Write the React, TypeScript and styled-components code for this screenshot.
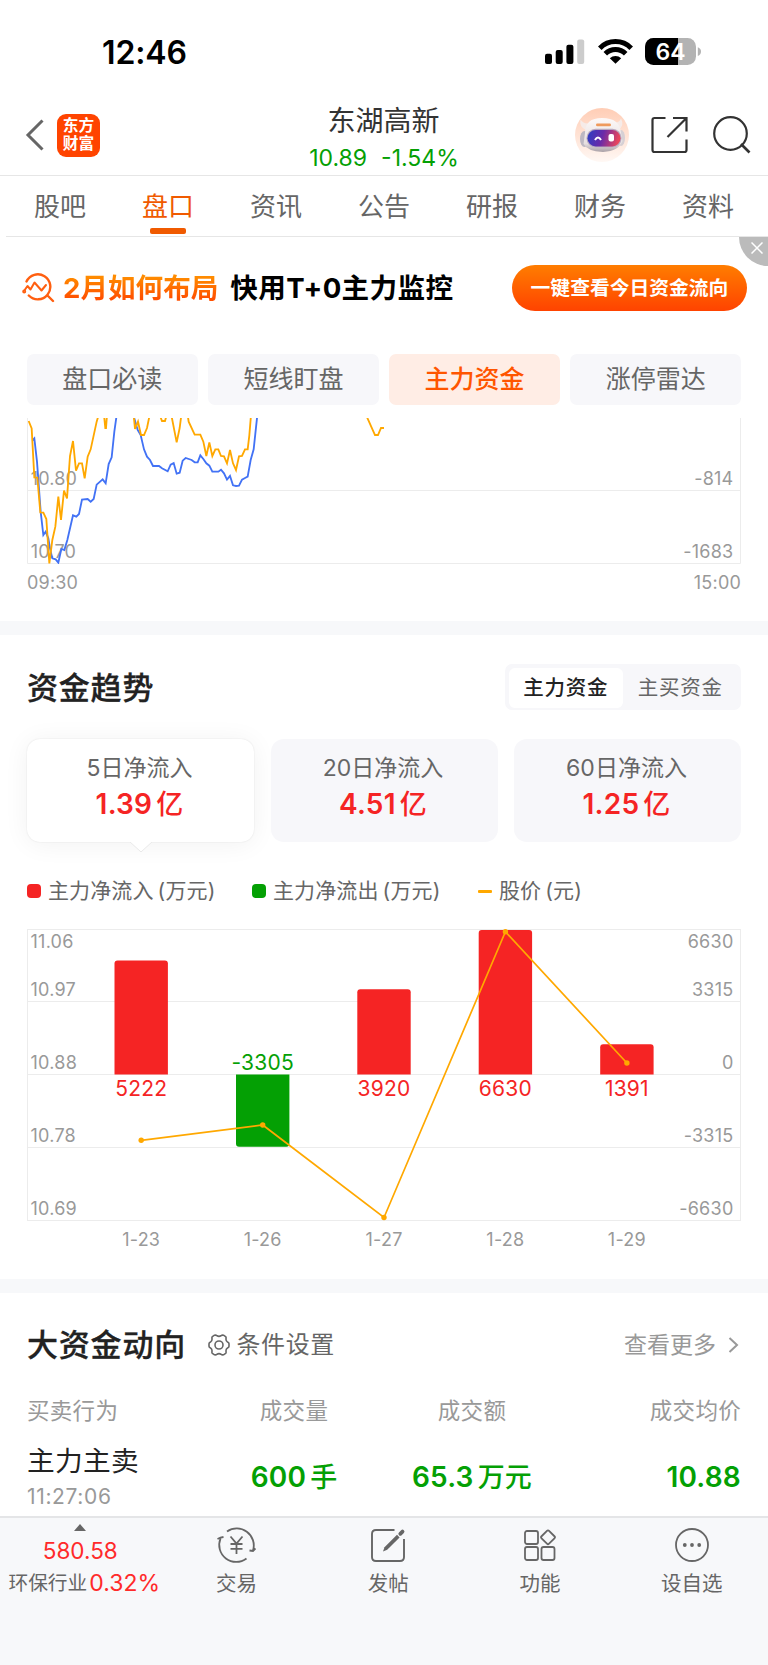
import React from "react";
import styled, { createGlobalStyle } from "styled-components";

const RED = "#f52424";
const GREEN = "#04a004";
const ORANGE = "#ffa800";
const GRID = "#ececec";
const FONT = `Inter, "Noto Sans CJK SC", sans-serif`;

const GlobalStyle = createGlobalStyle`
  * { box-sizing: border-box; }
  body { margin: 0; background: #fff; font-family: ${FONT}; color: #222; }
  svg { display: block; flex: none; }
  svg text { font-family: ${FONT}; }
`;

const Screen = styled.div`
  width: 768px;
  height: 1665px;
  display: flex;
  flex-direction: column;
  overflow: hidden;
  background: #fff;
  white-space: nowrap;
`;

/* ---------- status bar ---------- */
const StatusBar = styled.div`
  height: 95px;
  padding: 38px 66px 0 102px;
  display: flex;
  justify-content: space-between;
`;
const Clock = styled.div`
  font-size: 32px;
  line-height: 30px;
  font-weight: 600;
  letter-spacing: -0.15px;
  color: #000;
`;
const StatusIcons = styled.div`
  display: flex;
  align-items: flex-start;
  gap: 12.5px;
`;

/* ---------- navigation header ---------- */
const Header = styled.header`
  height: 81px;
  display: grid;
  grid-template-columns: 1fr auto 1fr;
  border-bottom: 1px solid #e6e6e6;
`;
const HeaderLeft = styled.div`
  display: flex;
  align-items: center;
  gap: 12px;
  padding-left: 25px;
`;
const Logo = styled.div`
  width: 43px;
  height: 43px;
  border-radius: 9px;
  background: #ff4400;
  color: #fff;
  display: flex;
  flex-direction: column;
  align-items: center;
  justify-content: center;
  font-size: 15.7px;
  line-height: 18px;
  font-weight: 700;
`;
const HeaderTitle = styled.div`
  display: flex;
  flex-direction: column;
  align-items: center;
`;
const StockName = styled.div`
  margin-top: 10px;
  margin-right: 1px;
  font-size: 28px;
  line-height: 32px;
  color: #333;
`;
const Quote = styled.div`
  margin-top: 5px;
  display: flex;
  gap: 14px;
  font-size: 23px;
  line-height: 32px;
  color: ${GREEN};
`;
const HeaderRight = styled.div`
  display: flex;
  align-items: center;
  justify-content: flex-end;
  padding-right: 17px;
`;
const HeaderIcon = styled.div<{ $gap: number }>`
  margin-left: ${(p) => p.$gap}px;
`;

/* ---------- tabs ---------- */
const Tabs = styled.nav`
  height: 61px;
  margin-left: 6px;
  display: grid;
  grid-template-columns: repeat(7, 108px);
  border-bottom: 1px solid #e6e6e6;
`;
const Tab = styled.div<{ $active?: boolean }>`
  display: flex;
  flex-direction: column;
  align-items: center;
  font-size: 26px;
  line-height: 34px;
  padding-top: 14px;
  color: ${(p) => (p.$active ? "#f05a00" : "#666")};
  &::after {
    content: "";
    width: 36px;
    height: 5.5px;
    margin-top: 4px;
    border-radius: 2px;
    background: ${(p) => (p.$active ? "#f05a00" : "transparent")};
  }
`;

/* ---------- promo banner ---------- */
const Banner = styled.div`
  position: relative;
  height: 117px;
  padding: 28px 21px 0 22px;
  display: flex;
  align-items: flex-start;
`;
const BannerText = styled.div`
  display: flex;
  align-items: center;
  height: 45px;
  color: #000;
  flex: 1;
`;
const BannerHot = styled.span`
  margin: 0 12px 0 7px;
  padding-bottom: 3px;
  font-size: 27.6px;
  font-weight: 700;
  background: linear-gradient(180deg, #ff8c00 25%, #ff5000 75%);
  -webkit-background-clip: text;
  background-clip: text;
  color: transparent;
`;
const BannerTitle = styled.span`
  padding-bottom: 3px;
  font-size: 27.6px;
  font-weight: 700;
  letter-spacing: 0.35px;
`;
const BannerButton = styled.div`
  width: 235px;
  height: 46px;
  border-radius: 24px;
  background: linear-gradient(180deg, #ff7d00, #ff4300);
  color: #fff;
  font-size: 19.8px;
  font-weight: 700;
  line-height: 46px;
  text-align: center;
`;
const BannerClose = styled.div`
  position: absolute;
  top: 0;
  right: 0;
  width: 29px;
  height: 29px;
  border-bottom-left-radius: 29px;
  background: #bbb;
  padding: 5px 0 0 12px;
`;

/* ---------- pills ---------- */
const Pills = styled.div`
  display: grid;
  grid-template-columns: repeat(4, 1fr);
  gap: 10.5px;
  padding: 0 27px 0.5px;
  height: 50px;
`;
const Pill = styled.div<{ $active?: boolean }>`
  border-radius: 7px;
  background: ${(p) => (p.$active ? "#ffede5" : "#f7f7fa")};
  color: ${(p) => (p.$active ? "#ff5500" : "#666")};
  font-weight: ${(p) => (p.$active ? 500 : 400)};
  font-size: 25px;
  line-height: 51px;
  text-align: center;
`;

const IntradayBox = styled.div`
  height: 217px;
  padding-top: 14px;
`;
const AxisRow = styled.div`
  display: flex;
  justify-content: space-between;
  padding: 8px 27px 0;
  font-size: 18px;
  line-height: 22px;
  letter-spacing: 0.2px;
  color: #999;
`;
const Divider = styled.div`
  height: 14px;
  background: #f7f8fa;
`;

/* ---------- trend section ---------- */
const TrendHead = styled.div`
  height: 104px;
  padding: 29px 27px 0;
  display: flex;
  justify-content: space-between;
`;
const SectionTitle = styled.h2`
  margin: 0;
  font-size: 31px;
  line-height: 48px;
  font-weight: 500;
  letter-spacing: 0.8px;
  -webkit-text-stroke: 0.3px #222;
  color: #222;
`;
const Segmented = styled.div`
  width: 236px;
  height: 46px;
  padding: 3.5px;
  display: grid;
  grid-template-columns: 1fr 1fr;
  border-radius: 7px;
  background: #f7f7fa;
`;
const Segment = styled.div<{ $active?: boolean }>`
  border-radius: 6px;
  background: ${(p) => (p.$active ? "#fff" : "transparent")};
  color: ${(p) => (p.$active ? "#222" : "#666")};
  font-weight: ${(p) => (p.$active ? 500 : 400)};
  font-size: 20.5px;
  letter-spacing: 0.75px;
  line-height: 40px;
  text-align: center;
`;
const Cards = styled.div`
  display: grid;
  grid-template-columns: repeat(3, 1fr);
  gap: 16.5px;
  padding: 0 27px;
  height: 103px;
`;
const Card = styled.div<{ $active?: boolean }>`
  position: relative;
  border-radius: 13px;
  background: ${(p) => (p.$active ? "#fff" : "#f7f7fa")};
  box-shadow: ${(p) => (p.$active ? "0 2px 26px rgba(0,0,0,0.06), 0 0 1.5px rgba(0,0,0,0.12)" : "none")};
  text-align: center;
  padding: 12px 2px 0 0;
`;
const CardPointer = styled.svg`
  position: absolute;
  left: 102px;
  top: 102px;
`;
const CardLabel = styled.div`
  font-size: 23px;
  line-height: 34px;
  color: #666;
`;
const CardValue = styled.div`
  font-size: 28px;
  line-height: 38px;
  font-weight: 600;
  letter-spacing: 0.2px;
  color: ${RED};
`;
const Unit = styled.span`
  margin-left: 4px;
  font-size: 27px;
  font-weight: 500;
`;
const Legend = styled.div`
  height: 86px;
  padding: 33px 27px 0;
  display: flex;
  align-items: flex-start;
`;
const LegendItem = styled.div<{ $width: number }>`
  width: ${(p) => p.$width}px;
  display: flex;
  align-items: center;
  font-size: 21px;
  line-height: 32px;
  letter-spacing: 0.12px;
  color: #666;
`;
const Swatch = styled.i<{ $color: string; $line?: boolean }>`
  width: 14px;
  height: ${(p) => (p.$line ? "3px" : "14px")};
  margin-right: 7px;
  border-radius: ${(p) => (p.$line ? "1px" : "4px")};
  background: ${(p) => p.$color};
`;
const LegendUnit = styled.span`
  margin-left: 4px;
`;
const TrendBox = styled.div`
  height: 351px;
  padding-top: 1px;
`;

/* ---------- large orders section ---------- */
const OrdersHead = styled.div`
  height: 98px;
  padding: 28px 27px 0;
  display: flex;
  align-items: flex-start;
`;
const Settings = styled.div`
  display: flex;
  align-items: center;
  gap: 7px;
  margin-left: 21.5px;
  font-size: 24px;
  letter-spacing: 0.6px;
  line-height: 48px;
  color: #666;
  flex: 1;
`;
const More = styled.div`
  display: flex;
  align-items: center;
  gap: 12px;
  padding-right: 2px;
  font-size: 23px;
  line-height: 48px;
  color: #999;
`;
const OrdersGrid = styled.div`
  display: grid;
  grid-template-columns: 178px 178px 178px 180px;
  padding: 0 27px;
`;
const Th = styled.div<{ $align?: string }>`
  height: 46px;
  font-size: 22.5px;
  letter-spacing: 0.3px;
  line-height: 40px;
  color: #999;
  text-align: ${(p) => p.$align || "left"};
`;
const Behaviour = styled.div`
  font-size: 27.7px;
  line-height: 40px;
  letter-spacing: 0.35px;
  padding-top: 4px;
  color: #222;
`;
const Time = styled.div`
  font-size: 21px;
  line-height: 32px;
  letter-spacing: 0.65px;
  color: #999;
`;
const Amount = styled.div<{ $align?: string }>`
  font-size: 28px;
  line-height: 40px;
  font-weight: 600;
  letter-spacing: 0.2px;
  padding-top: 20px;
  color: ${GREEN};
  text-align: ${(p) => p.$align || "center"};
`;

/* ---------- bottom bar ---------- */
const BottomBar = styled.footer`
  margin-top: auto;
  height: 149px;
  border-top: 2px solid #e4e5e7;
  background: #f7f8fa;
  display: grid;
  grid-template-columns: 160.5px repeat(4, 151.8px);
`;
const IndexCell = styled.div`
  display: flex;
  flex-direction: column;
  align-items: center;
  padding-top: 6px;
`;
const IndexValue = styled.div`
  margin-top: 5px;
  font-size: 22.5px;
  line-height: 30px;
  color: #ff2a2a;
`;
const IndexChange = styled.div`
  margin-left: 8px;
  margin-top: 4px;
  display: flex;
  align-items: center;
  gap: 2px;
  font-size: 19.7px;
  line-height: 26px;
  color: #666;
`;
const Percent = styled.span`
  font-size: 23px;
  color: #ff2a2a;
`;
const Action = styled.div`
  display: flex;
  flex-direction: column;
  align-items: center;
  padding-top: 7.5px;
  font-size: 20.5px;
  line-height: 26px;
  color: #666;
`;
const ActionLabel = styled.div`
  margin-top: 7px;
`;

const SignalIcon = () => (
  <svg width="40" height="27" viewBox="0 0 40 27">
    <rect x="0" y="15.7" width="7" height="10.3" rx="2" />
    <rect x="10.7" y="12" width="7" height="14" rx="2" />
    <rect x="21.4" y="6.7" width="7" height="19.3" rx="2" />
    <rect x="32.2" y="1.5" width="7" height="24.5" rx="2" fill="#ccc" />
  </svg>
);

const WifiIcon = () => (
  <svg width="35" height="27" viewBox="0 0 35 27">
    <g fill="none" stroke="#000" strokeWidth="5">
      <path d="M1.8 10.2A22 22 0 0 1 33.2 10.2" />
      <path d="M7.3 15.8A14.4 14.4 0 0 1 27.7 15.8" />
    </g>
    <path d="M11.8 20.2A8.4 8.4 0 0 1 23.2 20.2L17.5 25.8Z" />
  </svg>
);

const BatteryIcon = () => (
  <svg width="57" height="28" viewBox="0 0 57 28">
    <defs>
      <clipPath id="shell">
        <rect width="51" height="27" rx="8.5" />
      </clipPath>
    </defs>
    <g clipPath="url(#shell)">
      <rect width="51" height="27" fill="#b3b3b3" />
      <rect width="33" height="27" fill="#000" />
    </g>
    <path d="M52.8 9.3Q56 10.5 56 13.6T52.8 18Z" fill="#b3b3b3" />
    <text x="25.5" y="22" textAnchor="middle" fontSize="23" fontWeight="600" fill="#fff">64</text>
  </svg>
);

const RobotAvatar = () => (
  <svg width="54" height="54" viewBox="0 0 54 54">
    <defs>
      <linearGradient id="halo" x2="0" y2="1">
        <stop offset="0" stopColor="#ffcdb5" />
        <stop offset="1" stopColor="#fff8f4" />
      </linearGradient>
      <linearGradient id="visor" x2="1" y2="0.15">
        <stop offset="0" stopColor="#2a3fc4" />
        <stop offset="0.5" stopColor="#6a2aa8" />
        <stop offset="1" stopColor="#e8455c" />
      </linearGradient>
      <linearGradient id="helmet" x2="0" y2="1">
        <stop offset="0" stopColor="#fdf9f8" />
        <stop offset="0.75" stopColor="#e6dfe0" />
        <stop offset="1" stopColor="#a9a0a6" />
      </linearGradient>
    </defs>
    <circle cx="27" cy="27" r="27" fill="url(#halo)" />
    <path d="M5.500 11.500Q4 19 11 22L16 15Q9 17 5.500 11.500ZM46 10.500Q50 18 43 22L37 14Q44 16 46 10.500Z" fill="#f6ebe8" />
    <ellipse cx="9.500" cy="31" rx="4.500" ry="8" fill="#bdb8c2" />
    <ellipse cx="46" cy="30" rx="4" ry="8" fill="#d6d0d4" />
    <path d="M10 25Q10 10 27 10Q45 10 46 25L47.500 33Q44 43 28 44Q12 43 8.500 36Z" fill="url(#helmet)" />
    <rect x="21" y="15.500" width="15" height="2.800" rx="1.400" fill="#ef9a5c" />
    <rect x="11.500" y="20.800" width="35" height="18.500" rx="9" fill="#b9a9c0" />
    <rect x="12.500" y="22" width="33" height="16.500" rx="8.200" fill="url(#visor)" />
    <path d="M20 32Q23 27 26 32" fill="none" stroke="#fff" strokeWidth="2" />
    <rect x="33.500" y="26" width="5.500" height="7.500" rx="2" fill="#fff" />
  </svg>
);

const ShareIcon = () => (
  <svg width="37" height="38" viewBox="0 0 37 38" fill="none" stroke="#333" strokeWidth="2.200">
    <path d="M14.500 2H3.500Q1.500 2 1.500 4V34Q1.500 36 3.500 36H33.500Q35.500 36 35.500 34V23.500" />
    <path d="M22 2H35.500V15.500M35.500 2L16.500 21" />
  </svg>
);

const SearchIcon = () => (
  <svg width="38" height="38" viewBox="0 0 38 38" fill="none" stroke="#333" strokeWidth="2.200">
    <circle cx="17.500" cy="17.500" r="16.300" />
    <path d="M28 28L36.500 36.500" strokeWidth="2.600" />
  </svg>
);

const TrendLensIcon = () => (
  <svg width="34" height="31" viewBox="0 0 34 31" fill="none" stroke="#ff5f10" strokeWidth="2.400" strokeLinecap="round" strokeLinejoin="round">
    <path d="M4.500 9.500A12.500 12.500 0 1 1 6.800 23.500M26 24L31 29" />
    <path d="M2 19L5.500 14L8.500 17.500L12.500 10.500L19.500 18.500L24 13" strokeWidth="2" />
    <circle cx="2.200" cy="19.500" r="0.800" />
  </svg>
);

const PRICE_RUNS = [
  "86,63 95,85 103,232 112,233 121,337 130,338 139,357 148,490 157,420 166,380 175,290 183,360 192,272 201,295 210,168 219,123 228,212 237,190 246,190 254,235 263,170 272,148 290,65 296,45",
  "312,45 316,84 318,84 321,45",
  "401,45 405,87 414,65 423,105 432,105 441,84 449,45",
  "479,45 486,63 495,63 500,45",
  "514,45 530,127 539,84 544,45",
  "563,45 566,65 584,104 601,104 610,125 619,168 628,127 637,168 646,148 655,148 663,168 672,169 681,190 690,150 699,190 708,210 717,169 726,168 735,148 743,148 748,106 753,45",
  "1098,45 1104,58 1125,105 1134,105 1143,84 1152,84",
];
const FLOW_RUNS = [
  "97,122 103,115 111,185 122,335 130,405 137,395 145,415 150,445 157,475 167,478 175,488 184,447 193,450 202,420 219,346 229,350 237,342 246,299 263,297 272,305 281,297 290,254 308,238 317,250 326,192 335,172 343,95 350,45",
  "400,45 413,90 422,105 432,148 441,170 450,180 459,198 477,198 486,205 503,214 512,194 521,189 530,221 539,218 548,182 557,174 575,180 584,187 593,187 601,166 610,177 619,190 628,197 637,215 655,215 663,209 672,220 681,239 690,228 699,256 708,258 717,257 726,239 735,234 743,230 752,180 761,148 772,45",
];

const IntradayChart = () => (
  <svg width="768" height="146" viewBox="0 54 2304 438">
    <path d="M82.500 50V490.500H2221.500V50M82.500 271.500H2221.500" fill="none" stroke={GRID} strokeWidth="3" />
    <g fontSize="54" fill="#999" letterSpacing="0.6">
      <text x="92" y="256">10.80</text>
      <text x="92" y="475">10.70</text>
      <text x="2200" y="256" textAnchor="end">-814</text>
      <text x="2200" y="475" textAnchor="end">-1683</text>
    </g>
    <g fill="none" strokeWidth="5.500">
      {FLOW_RUNS.map((p) => <polyline key={p} points={p} stroke="#4272f5" />)}
      {PRICE_RUNS.map((p) => <polyline key={p} points={p} stroke={ORANGE} />)}
    </g>
  </svg>
);

const DAYS = [
  { day: "1-23", flow: 5222, x: 141.2, top: 31.5, bottom: 145.5, price: 211.3 },
  { day: "1-26", flow: -3305, x: 262.7, top: 145.5, bottom: 217.8, price: 196 },
  { day: "1-27", flow: 3920, x: 384, top: 60.2, bottom: 145.5, price: 288.5 },
  { day: "1-28", flow: 6630, x: 505.4, top: 1, bottom: 145.5, price: 2.7 },
  { day: "1-29", flow: 1391, x: 626.9, top: 115.3, bottom: 145.5, price: 134 },
];
const LEFT_AXIS = ["11.06", "10.97", "10.88", "10.78", "10.69"];
const RIGHT_AXIS = ["6630", "3315", "0", "-3315", "-6630"];
const AXIS_Y = [18.5, 67, 140, 213.3, 286.3];

function barPath(x: number, top: number, bottom: number, up: boolean) {
  const l = x - 26.7;
  const r = x + 26.7;
  return up
    ? `M${l} ${bottom}V${top + 3}Q${l} ${top} ${l + 3} ${top}H${r - 3}Q${r} ${top} ${r} ${top + 3}V${bottom}Z`
    : `M${l} ${top}V${bottom - 3}Q${l} ${bottom} ${l + 3} ${bottom}H${r - 3}Q${r} ${bottom} ${r} ${bottom - 3}V${top}Z`;
}

const TrendChart = () => (
  <svg width="768" height="330" viewBox="0 0 768 330">
    <path d="M27.500 0V292M740.500 0V292M27 .500H741M27 72.500H741M27 145.500H741M27 218.500H741M27 291.500H741" stroke={GRID} />
    <g fontSize="18" fill="#999" letterSpacing="0.25">
      {LEFT_AXIS.map((t, i) => <text key={t} x="30.5" y={AXIS_Y[i]}>{t}</text>)}
      {RIGHT_AXIS.map((t, i) => <text key={t} x="733.5" y={AXIS_Y[i]} textAnchor="end">{t}</text>)}
      {DAYS.map((d) => <text key={d.day} x={d.x} y="317" textAnchor="middle">{d.day}</text>)}
    </g>
    {DAYS.map((d) => (
      <g key={d.day} fill={d.flow > 0 ? RED : GREEN}>
        <path d={barPath(d.x, d.top, d.bottom, d.flow > 0)} />
        <text x={d.x} y={d.flow > 0 ? 166.5 : 141} textAnchor="middle" fontSize="21" letterSpacing="0.2">{d.flow}</text>
      </g>
    ))}
    <polyline points={DAYS.map((d) => `${d.x},${d.price}`).join(" ")} fill="none" stroke={ORANGE} strokeWidth="1.7" />
    {DAYS.map((d) => <circle key={d.day} cx={d.x} cy={d.price} r="2.7" fill={ORANGE} />)}
  </svg>
);

const GearIcon = () => (
  <svg width="22" height="22" viewBox="0 0 22 22" fill="none" stroke="#666" strokeWidth="1.600" strokeLinejoin="round">
    <path d="M6.500 1.200Q8 .800 9 1.800Q11 3 13 1.800Q14 .800 15.500 1.200L17.600 2.600Q18.300 3.200 18 4.700Q17.800 7 19.500 8Q21 8.600 21 9.700V12.300Q21 13.400 19.500 14Q17.800 15 18 17.300Q18.300 18.800 17.600 19.400L15.500 20.800Q14 21.200 13 20.200Q11 19 9 20.200Q8 21.200 6.500 20.800L4.400 19.400Q3.700 18.800 4 17.300Q4.200 15 2.500 14Q1 13.400 1 12.300V9.700Q1 8.600 2.500 8Q4.200 7 4 4.700Q3.700 3.200 4.400 2.600Z" />
    <circle cx="11" cy="11" r="4" />
  </svg>
);

const TradeIcon = () => (
  <svg width="39" height="38" viewBox="0 0 39 38" fill="none" stroke="#666" strokeWidth="1.800">
    <path d="M10 5.500A17 17 0 0 1 36 24.500M32.500 24.500L36 25L38.500 22.500" />
    <path d="M29.500 32.500A17 17 0 0 1 3.500 12.500M.500 13L3.500 11.500L6.500 11" />
    <path d="M13.500 10.500L19.500 17.500L25.500 10.500M19.500 17.500V28M13.500 18H25.500M13.500 22.800H25.500" />
  </svg>
);

const PostIcon = () => (
  <svg width="36" height="38" viewBox="0 0 36 38" fill="none" stroke="#666" strokeWidth="1.900">
    <path d="M24.500 4H6Q2 4 2 8V31Q2 35 6 35H30Q34 35 34 31V13" />
    <path d="M13 25.500L14.500 21.300L27 8.800L29.600 11.400L17.200 23.800Z" fill="#666" stroke="none" />
    <path d="M30.300 7.800L32.500 5.600" strokeWidth="3.800" strokeLinecap="round" />
  </svg>
);

const GridIcon = () => (
  <svg width="32" height="38" viewBox="0 0 32 38" fill="none" stroke="#666" strokeWidth="1.800">
    <rect x="1" y="5" width="13" height="13" rx="2" />
    <rect x="1" y="21" width="13" height="13" rx="2" />
    <rect x="17.500" y="21" width="13" height="13" rx="2" />
    <rect x="18.700" y="6" width="10.600" height="10.600" rx="1.500" transform="rotate(45 24 11.300)" />
  </svg>
);

const MoreIcon = () => (
  <svg width="36" height="38" viewBox="0 0 36 38">
    <circle cx="18" cy="19" r="16" fill="none" stroke="#666" strokeWidth="1.800" />
    <circle cx="10.800" cy="19" r="1.900" fill="#666" />
    <circle cx="18" cy="19" r="1.900" fill="#666" />
    <circle cx="25.200" cy="19" r="1.900" fill="#666" />
  </svg>
);

const TABS = ["股吧", "盘口", "资讯", "公告", "研报", "财务", "资料"];
const PILLS = ["盘口必读", "短线盯盘", "主力资金", "涨停雷达"];
const CARDS = [
  { label: "5日净流入", value: "1.39" },
  { label: "20日净流入", value: "4.51" },
  { label: "60日净流入", value: "1.25" },
];
const ACTIONS = [
  { label: "交易", Icon: TradeIcon },
  { label: "发帖", Icon: PostIcon },
  { label: "功能", Icon: GridIcon },
  { label: "设自选", Icon: MoreIcon },
];

export default function App() {
  return (
    <>
      <GlobalStyle />
      <Screen>
        <StatusBar>
          <Clock>12:46</Clock>
          <StatusIcons>
            <SignalIcon />
            <WifiIcon />
            <BatteryIcon />
          </StatusIcons>
        </StatusBar>

        <Header>
          <HeaderLeft>
            <svg width="20" height="34" viewBox="0 0 20 34" fill="none" stroke="#666" strokeWidth="3">
              <path d="M17.500 2.500L3 17L17.500 31.500" />
            </svg>
            <Logo>
              <span>东方</span>
              <span>财富</span>
            </Logo>
          </HeaderLeft>
          <HeaderTitle>
            <StockName>东湖高新</StockName>
            <Quote>
              <span>10.89</span>
              <span>-1.54%</span>
            </Quote>
          </HeaderTitle>
          <HeaderRight>
            <RobotAvatar />
            <HeaderIcon $gap={22.5}><ShareIcon /></HeaderIcon>
            <HeaderIcon $gap={25}><SearchIcon /></HeaderIcon>
          </HeaderRight>
        </Header>

        <Tabs>
          {TABS.map((t) => <Tab key={t} $active={t === "盘口"}>{t}</Tab>)}
        </Tabs>

        <Banner>
          <BannerText>
            <TrendLensIcon />
            <BannerHot>2月如何布局</BannerHot>
            <BannerTitle>快用T+0主力监控</BannerTitle>
          </BannerText>
          <BannerButton>一键查看今日资金流向</BannerButton>
          <BannerClose>
            <svg width="12" height="12" viewBox="0 0 12 12" stroke="#fff" strokeWidth="1.500">
              <path d="M.500 .500L11.500 11.500M11.500 .500L.500 11.500" />
            </svg>
          </BannerClose>
        </Banner>

        <Pills>
          {PILLS.map((t) => <Pill key={t} $active={t === "主力资金"}>{t}</Pill>)}
        </Pills>

        <IntradayBox>
          <IntradayChart />
          <AxisRow>
            <span>09:30</span>
            <span>15:00</span>
          </AxisRow>
        </IntradayBox>
        <Divider />

        <TrendHead>
          <SectionTitle>资金趋势</SectionTitle>
          <Segmented>
            <Segment $active>主力资金</Segment>
            <Segment>主买资金</Segment>
          </Segmented>
        </TrendHead>
        <Cards>
          {CARDS.map((c, i) => (
            <Card key={c.label} $active={i === 0}>
              <CardLabel>{c.label}</CardLabel>
              <CardValue>{c.value}<Unit>亿</Unit></CardValue>
              {i === 0 && (
                <CardPointer width="24" height="12" viewBox="0 0 24 12">
                  <path d="M0 0L12 11L24 0" fill="#fff" stroke="#e9e9e9" strokeWidth="1" />
                  <rect width="24" height="1" fill="#fff" />
                </CardPointer>
              )}
            </Card>
          ))}
        </Cards>
        <Legend>
          <LegendItem $width={225}><Swatch $color={RED} />主力净流入<LegendUnit>(万元)</LegendUnit></LegendItem>
          <LegendItem $width={226}><Swatch $color={GREEN} />主力净流出<LegendUnit>(万元)</LegendUnit></LegendItem>
          <LegendItem $width={120}><Swatch $color={ORANGE} $line />股价<LegendUnit>(元)</LegendUnit></LegendItem>
        </Legend>
        <TrendBox>
          <TrendChart />
        </TrendBox>
        <Divider />

        <OrdersHead>
          <SectionTitle>大资金动向</SectionTitle>
          <Settings><GearIcon />条件设置</Settings>
          <More>
            查看更多
            <svg width="11" height="18" viewBox="0 0 11 18" fill="none" stroke="#999" strokeWidth="2">
              <path d="M1.500 2L9 9L1.500 16" />
            </svg>
          </More>
        </OrdersHead>
        <OrdersGrid>
          <Th>买卖行为</Th>
          <Th $align="center">成交量</Th>
          <Th $align="center">成交额</Th>
          <Th $align="right">成交均价</Th>
          <div>
            <Behaviour>主力主卖</Behaviour>
            <Time>11:27:06</Time>
          </div>
          <Amount>600<Unit>手</Unit></Amount>
          <Amount>65.3<Unit>万元</Unit></Amount>
          <Amount $align="right">10.88</Amount>
        </OrdersGrid>

        <BottomBar>
          <IndexCell>
            <svg width="12" height="7" viewBox="0 0 12 7"><path d="M6 0L12 7H0Z" fill="#666" /></svg>
            <IndexValue>580.58</IndexValue>
            <IndexChange>环保行业<Percent>0.32%</Percent></IndexChange>
          </IndexCell>
          {ACTIONS.map(({ label, Icon }) => (
            <Action key={label}>
              <Icon />
              <ActionLabel>{label}</ActionLabel>
            </Action>
          ))}
        </BottomBar>
      </Screen>
    </>
  );
}
